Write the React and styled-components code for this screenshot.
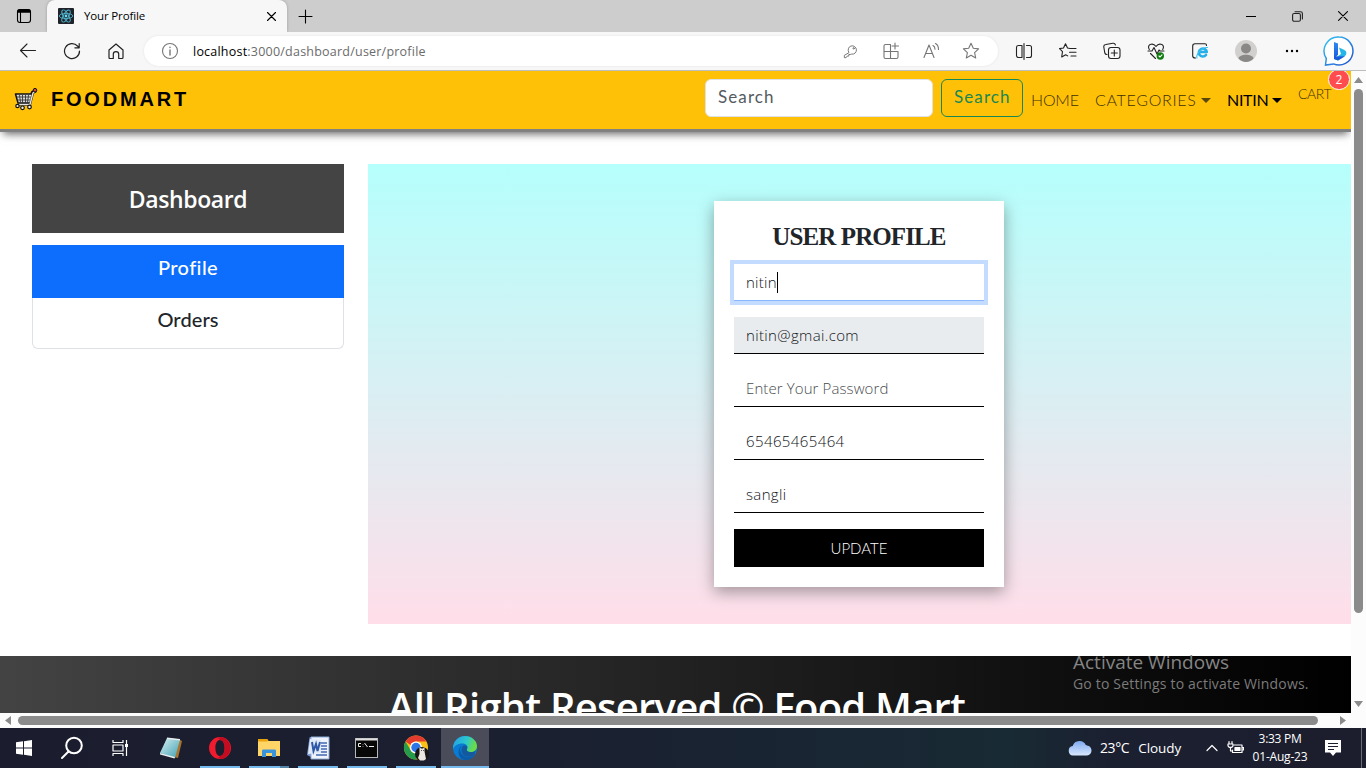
import React from "react";
import styled, { createGlobalStyle } from "styled-components";

const GlobalStyle = createGlobalStyle`
  * { box-sizing: border-box; }
  body { margin: 0; background: #fff; overflow: hidden; }
  svg { display: block; flex: none; }
`;

const ui = `"Open Sans", "Noto Sans", sans-serif`;
const lato = `Lato, sans-serif`;

const Screen = styled.div`
  width: 1366px;
  height: 768px;
  display: flex;
  flex-direction: column;
  overflow: hidden;
  position: relative;
  font-family: ${ui};
`;

const Label = styled.span`
  font-family: ${(p) => p.$font || ui};
  font-size: ${(p) => p.$size}px;
  font-weight: ${(p) => p.$weight || 400};
  letter-spacing: ${(p) => p.$spacing || 0}px;
  color: ${(p) => p.$color || "#000"};
  line-height: ${(p) => p.$line || 20}px;
  white-space: pre;
`;

/* browser chrome */
const TabStrip = styled.div`
  height: 32px;
  flex: none;
  background: #cdcdcd;
  display: flex;
`;
const StripButton = styled.div`
  width: ${(p) => p.$w}px;
  height: 32px;
  display: flex;
  align-items: center;
  justify-content: center;
`;
const Tab = styled.div`
  width: 240px;
  height: 32px;
  background: #f7f7f7;
  border-radius: 8px 8px 0 0;
  box-shadow: 0 0 3px rgba(0, 0, 0, 0.25);
  display: flex;
  align-items: center;
  padding: 0 11px;
  gap: 10px;
`;
const TabTitle = styled(Label)`
  flex: 1;
`;
const WindowButtons = styled.div`
  margin-left: auto;
  display: flex;
`;
const Toolbar = styled.div`
  height: 39px;
  flex: none;
  background: #f7f7f7;
  border-bottom: 1px solid #bebebe;
  display: flex;
  align-items: center;
  padding-left: 6px;
`;
const ToolButton = styled.div`
  width: ${(p) => p.$w || 44}px;
  height: 38px;
  display: flex;
  align-items: center;
  justify-content: center;
`;
const AddressBar = styled.div`
  width: 854px;
  height: 30px;
  margin: 0 4px 0 6px;
  border-radius: 15px;
  background: #fff;
  box-shadow: 0 0 3px rgba(0, 0, 0, 0.08);
  display: flex;
  align-items: center;
  padding: 0 7px 0 17px;
`;
const Url = styled(Label)`
  flex: 1;
  padding: 1px 0 0 14px;
`;

/* page viewport */
const Viewport = styled.div`
  height: 642px;
  flex: none;
  display: flex;
`;
const Page = styled.div`
  width: 1351px;
  height: 642px;
  overflow: hidden;
  background: #fff;
`;
const Navbar = styled.nav`
  height: 61px;
  background: #ffc107;
  border-bottom: 3px solid #808080;
  box-shadow: 0 5px 8px -3px rgba(0, 0, 0, 0.6);
  display: flex;
  align-items: flex-start;
  padding: 8px 0 0 13px;
`;
const Brand = styled.div`
  display: flex;
  align-items: center;
  height: 40px;
  gap: 13px;
  flex: 1;
`;
const SearchInput = styled.div`
  width: 228px;
  height: 38px;
  background: #fff;
  border: 1px solid #dee2e6;
  border-radius: 6px;
  padding: 4px 12px;
`;
const SearchButton = styled.div`
  width: 82px;
  height: 38px;
  margin-left: 8px;
  border: 1px solid #198754;
  border-radius: 6px;
  display: flex;
  padding: 4px 0 0 12px;
`;
const NavLink = styled.div`
  margin-left: ${(p) => p.$gap}px;
  width: ${(p) => p.$w}px;
  height: 42px;
  display: flex;
  align-items: center;
  justify-content: space-between;
`;
const CaretDown = styled.i`
  border: 5px solid transparent;
  border-top-color: ${(p) => p.$color};
  border-bottom: 0;
`;
const CartLink = styled.div`
  position: relative;
  width: 53px;
  margin-left: 16px;
  padding-top: 3px;
`;
const CartBadge = styled.div`
  position: absolute;
  right: 1px;
  top: -10px;
  width: 22px;
  height: 21px;
  border: 1px solid #fff;
  border-radius: 11px;
  background: #ff4d4f;
  display: flex;
  align-items: center;
  justify-content: center;
  clip-path: inset(2px 0 0 0);
`;
const Content = styled.main`
  height: 460px;
  margin-top: 32px;
  padding-left: 32px;
  display: flex;
  gap: 24px;
`;
const Sidebar = styled.aside`
  width: 312px;
  flex: none;
`;
const DashboardTitle = styled.div`
  height: 69px;
  background: #444;
  display: flex;
  align-items: center;
  justify-content: center;
  padding-top: 1px;
`;
const Menu = styled.div`
  margin-top: 12px;
`;
const MenuItem = styled.div`
  height: ${(p) => (p.$active ? 53 : 51)}px;
  display: flex;
  justify-content: center;
  padding-top: ${(p) => (p.$active ? 10 : 9)}px;
  background: ${(p) => (p.$active ? "#0d6efd" : "#fff")};
  border: ${(p) => (p.$active ? "0" : "1px solid #dee2e6")};
  border-top: 0;
  border-radius: ${(p) => (p.$active ? "0" : "0 0 6px 6px")};
`;
const Panel = styled.section`
  flex: 1;
  background: linear-gradient(#b5fffc, #ffdee9);
  padding: 37px 0 0 346px;
`;
const Card = styled.div`
  width: 290px;
  height: 386px;
  background: #fff;
  box-shadow: 0 5px 15px rgba(0, 0, 0, 0.35);
  padding: 20px;
  display: flex;
  flex-direction: column;
`;
const CardTitle = styled.div`
  height: 43px;
  display: flex;
  justify-content: center;
`;
const Field = styled.div`
  height: 37px;
  flex: none;
  margin-bottom: 16px;
  padding: 0 12px;
  display: flex;
  align-items: center;
  background: ${(p) => (p.$disabled ? "#e9ecef" : "#fff")};
  border-bottom: 1px solid ${(p) => (p.$focus ? "#86b7fe" : "#000")};
  box-shadow: ${(p) => (p.$focus ? "0 0 0 4px #c2dbff" : "none")};
`;
const TextCaret = styled.i`
  width: 1px;
  height: 21px;
  background: #000;
`;
const UpdateButton = styled.div`
  height: 38px;
  background: #000;
  display: flex;
  align-items: center;
  justify-content: center;
`;
const Footer = styled.footer`
  margin-top: 32px;
  height: 120px;
  background: linear-gradient(to right, #434343, #000);
  padding: 21px 0 0 388px;
`;

/* scrollbars */
const VerticalBar = styled.div`
  width: 15px;
  background: #fcfcfc;
  display: flex;
  flex-direction: column;
  align-items: center;
  padding: 6px 0;
`;
const HorizontalBar = styled.div`
  height: 15px;
  flex: none;
  background: #fcfcfc;
  display: flex;
  align-items: center;
  padding: 0 20px 0 5px;
`;
const Thumb = styled.div`
  width: ${(p) => p.$w}px;
  height: ${(p) => p.$h}px;
  border-radius: 5px;
  background: #8b8b8b;
`;
const Spacer = styled.div`
  flex: 1;
`;
const ThumbGap = styled.div`
  width: 7px;
  height: 6px;
`;

/* desktop */
const Watermark = styled.div`
  position: absolute;
  left: 1073px;
  top: 650px;
  display: flex;
  flex-direction: column;
`;
const Taskbar = styled.div`
  height: 40px;
  flex: none;
  background: linear-gradient(to right, #1b1d2e 0, #1b1f30 480px, #192432 760px, #182a34 1010px, #1b2030 1110px, #1c1d2d 100%);
  display: flex;
`;
const SystemButton = styled.div`
  width: ${(p) => p.$w || 48}px;
  height: 40px;
  display: flex;
  align-items: center;
  justify-content: center;
`;
const AppButton = styled.div`
  position: relative;
  width: ${(p) => (p.$active ? 48 : 49)}px;
  height: 40px;
  padding-right: ${(p) => (p.$active ? 0 : 2)}px;
  display: flex;
  align-items: center;
  justify-content: center;
  background: ${(p) => (p.$active ? "#4a4c59" : "transparent")};
  &::after {
    content: "";
    display: ${(p) => (p.$open || p.$active ? "block" : "none")};
    position: absolute;
    bottom: 0;
    left: ${(p) => (p.$active ? 0 : 4)}px;
    width: ${(p) => (p.$active ? 48 : 40)}px;
    height: 2px;
    background: ${(p) =>
      p.$stack ? "linear-gradient(to right, #76b9ed 31px, #5484a8 31px)" : "#76b9ed"};
  }
`;
const AppRow = styled.div`
  display: flex;
  padding-left: 3px;
  flex: 1;
`;
const Tray = styled.div`
  display: flex;
  align-items: center;
  height: 40px;
`;
const Weather = styled.div`
  display: flex;
  align-items: center;
  width: 137px;
`;
const Overflow = styled.div`
  margin-right: 3px;
`;
const Temperature = styled(Label)`
  margin: 0 9px 0 8px;
`;
const Clock = styled.div`
  width: 64px;
  display: flex;
  flex-direction: column;
  align-items: center;
`;
const ShowDesktop = styled.div`
  width: 5px;
  height: 40px;
  border-left: 1px solid #6a6b77;
`;

function Icon({ s = 18, vb = 18, color = "#222", w = 1.1, children }) {
  return (
    <svg width={s} height={s} viewBox={`0 0 ${vb} ${vb}`} fill="none" stroke={color}
      strokeWidth={w} strokeLinecap="round" strokeLinejoin="round">
      {children}
    </svg>
  );
}

const WorkspaceIcon = () => (
  <Icon s={16} vb={16} color="#000">
    <rect x="1.5" y="1.5" width="13" height="13" rx="2.5" />
    <path d="M2 4V3.5C2 2.6 2.600 2 3.500 2h9c.9 0 1.500.6 1.500 1.500V4z" fill="#000" strokeWidth="1.500" />
    <path d="M4.500 4v10" />
  </Icon>
);
const ReactIcon = () => (
  <svg width="16" height="16" viewBox="0 0 16 16">
    <rect width="16" height="16" rx="1" fill="#20232a" />
    <g fill="none" stroke="#4fb3cc" strokeWidth="0.9">
      <ellipse cx="8" cy="8" rx="6.800" ry="2.600" />
      <ellipse cx="8" cy="8" rx="6.800" ry="2.600" transform="rotate(60 8 8)" />
      <ellipse cx="8" cy="8" rx="6.800" ry="2.600" transform="rotate(120 8 8)" />
    </g>
    <circle cx="8" cy="8" r="1.400" fill="#61dafb" />
  </svg>
);
const CloseIcon = ({ s = 9, w = 1.1 }) => (
  <Icon s={s} vb={9} w={w}><path d="M.5.5l8 8M8.500.5l-8 8" stroke="#000" /></Icon>
);
const StarPath = "M9 1.300l2.300 5 5.300.600-4 3.700 1.100 5.400L9 13.300 4.300 16l1.100-5.400-4-3.700 5.300-.600z";

const CartIcon = () => (
  <svg width="25" height="24" viewBox="0 0 25 24" fill="none" strokeLinejoin="round">
    <path d="M23 3.500l-3.500 2L16.500 17H5.500" stroke="#111" strokeWidth="3.400" />
    <path d="M2.500 7h17l-2.500 9H5z" fill="#ddd" stroke="#111" strokeWidth="1.500" />
    <path d="M4 10h14.500M4.500 13h13M6.500 8l1 7.500M9.500 8v8M12.500 8v8M15.500 8l-1 8" stroke="#333" strokeWidth=".9" />
    <path d="M22.500 3.500L20 6l-3 11.500H5.500" stroke="#e4e4e4" strokeWidth="1.400" />
    <circle cx="22" cy="3.200" r="1.800" fill="#e04a3c" stroke="#111" />
    <circle cx="4.500" cy="19" r="1.700" fill="#eee" stroke="#111" strokeWidth="1.200" />
    <circle cx="9.500" cy="20.800" r="1.800" fill="#eee" stroke="#111" strokeWidth="1.200" />
    <circle cx="16.500" cy="20" r="1.800" fill="#eee" stroke="#111" strokeWidth="1.200" />
  </svg>
);

const BingIcon = () => (
  <svg width="32" height="32" viewBox="0 0 32 32">
    <defs>
      <linearGradient id="ring" x1="0" y1="0" x2="1" y2="1">
        <stop offset="0" stopColor="#35c9f0" /><stop offset="1" stopColor="#2350cf" />
      </linearGradient>
      <linearGradient id="bee" x1="0" y1="0" x2="0" y2="1">
        <stop offset="0" stopColor="#2f8af0" /><stop offset="1" stopColor="#1a5bdc" />
      </linearGradient>
    </defs>
    <path d="M16 2a14 14 0 1 1-5.500 26.900L2.500 30l.8-6.500A14 14 0 0 1 16 2z" fill="#fff" stroke="url(#ring)" strokeWidth="1.500" />
    <path d="M11 7l4 1.600v11.200L11 24z" fill="url(#bee)" />
    <path d="M16 12.500l5 2.300c3 1.500 3 4.500 1 6.200L15 25.500 11 24l7-5z" fill="#24b5e9" />
    <path d="M11 21.500V24l4 1.500 7-4.200z" fill="#1a5bdc" />
  </svg>
);

const browserActions = [
  <Icon key="split"><path d="M6.500 3.500H3.500c-1 0-2 .8-2 2v8c0 1.200 1 2 2 2h3M11.500 3.500h3c1 0 2 .8 2 2v8c0 1.200-1 2-2 2h-3M9 1.500v16M7 3.500v12" /></Icon>,
  <Icon key="favorites"><path d="M11 6.500L8.500 6 6.500 1.800 4.500 6l-4 .6 3 3-.8 5.400 4-2.300 2 1.200M11 6.500h6M10.500 10.300h6.500M12 14h5" /></Icon>,
  <Icon key="collections"><path d="M4 12.500c-1.400 0-2-.8-2.200-1.500L.8 5c-.2-1.400.6-2.300 2-2.500l7-1.200c1.400-.2 2.300.5 2.600 1.700" /><rect x="5.500" y="5.500" width="11.500" height="11" rx="2.500" /><path d="M11.300 8v6M8.300 11h6" /></Icon>,
  <Icon key="health"><path d="M2.300 7.500C.8 5 1.500 3 4 2.300c2-.5 3.800.5 5 2.200 1.200-1.700 3-2.700 5-2.200 2.500.7 3.200 2.700 1.700 5.200M1 9h4l2-3.500L10 12l2-4 1 1h4M3.500 11.500l5 5" /><circle cx="13.300" cy="14" r="3.700" fill="#107c10" stroke="none" /><path d="M12 14l1 1 2-2.200" stroke="#fff" /></Icon>,
  <Icon key="ie"><path d="M4.500 16c-1.800 0-2.800-.8-2.800-2V4c0-1.500 1-2.300 2.300-2.300h10c1 0 1.500.8 1.500 1.800" /><path d="M15 13a4 4 0 1 1 .8-3H8.500" stroke="#25aee8" strokeWidth="2.600" /><path d="M6 16C4.500 13 11 5 16.500 5.500" stroke="#35c0f0" /></Icon>,
];

export default function App() {
  return (
    <Screen>
      <GlobalStyle />
      <TabStrip>
        <StripButton $w={47}><WorkspaceIcon /></StripButton>
        <Tab>
          <ReactIcon />
          <TabTitle $size={11.5} $spacing={-0.15}>Your Profile</TabTitle>
          <CloseIcon s={9} />
        </Tab>
        <StripButton $w={36}>
          <Icon s={15} vb={15}><path d="M7.500 1v13M1 7.500h13" stroke="#000" /></Icon>
        </StripButton>
        <WindowButtons>
          <StripButton $w={46}><Icon s={10} vb={10}><path d="M0 5.500h10" stroke="#000" /></Icon></StripButton>
          <StripButton $w={46}><Icon s={11} vb={11}><rect x=".6" y="2.500" width="7.800" height="7.800" rx="1.500" /><path d="M3 .7h5.500c1.300 0 1.900.7 1.900 1.900V8" /></Icon></StripButton>
          <StripButton $w={46}><CloseIcon s={10} w={1} /></StripButton>
        </WindowButtons>
      </TabStrip>
      <Toolbar>
        <ToolButton><Icon><path d="M16.500 8.500H1.500M8 2L1.500 8.500 8 15" /></Icon></ToolButton>
        <ToolButton><Icon w={1.2}><path d="M16.500 9A7.500 7.500 0 1 1 14.500 4l1.500 1.500M16.200 1.500v4.300h-4.300" /></Icon></ToolButton>
        <ToolButton><Icon w={1.2}><path d="M2 8l7-6 7 6v7.500c0 .6-.4 1-1 1h-3.300V12c0-3.200-5.400-3.200-5.400 0v4.500H3c-.6 0-1-.4-1-1z" /></Icon></ToolButton>
        <AddressBar>
          <Icon color="#767676"><circle cx="9" cy="9" r="7.500" /><path d="M9 8v5M9 5.300v.2" strokeWidth="1.400" /></Icon>
          <Url $size={12.5} $spacing={0.22} $color="#6b6b6b"><Label $size={12.5} $spacing={0.22}>localhost</Label>:3000/dashboard/user/profile</Url>
          <ToolButton $w={40}><Icon s={16} color="#767676"><path d="M6.500 10.500a4.700 4.700 0 1 1 3 2L8 13H6.500v1.700H4.700L3.500 16.500H1.500v-2.200z" /><circle cx="12" cy="6" r=".8" /></Icon></ToolButton>
          <ToolButton $w={40}><Icon color="#767676"><path d="M8.500 2.500h-5c-1 0-1.500.5-1.500 1.500v11c0 1 .5 1.500 1.500 1.500h11c1 0 1.500-.5 1.500-1.500V9.500H2M8.500 2.500v14M13 1v6M10 4h6.500" /></Icon></ToolButton>
          <ToolButton $w={40}><Icon color="#767676"><path d="M2 15.500L7 3l5 12.500M3.800 11.500h6.500M11 3.500c1.500.7 2 2 2 3.800M13.500 1.500c2.300 1.200 3 3.500 3 6" /></Icon></ToolButton>
          <ToolButton $w={40}><Icon color="#767676"><path d={StarPath} /></Icon></ToolButton>
        </AddressBar>
        {browserActions.map((icon) => <ToolButton key={icon.key}>{icon}</ToolButton>)}
        <ToolButton $w={48}>
          <svg width="22" height="22" viewBox="0 0 22 22"><circle cx="11" cy="11" r="11" fill="#d2d0ce" /><circle cx="11" cy="8.500" r="5" fill="#8a8886" /><path d="M3.500 18.500c1-5 14-5 15 0-4 4.600-11 4.600-15 0z" fill="#8a8886" /></svg>
        </ToolButton>
        <ToolButton><svg width="14" height="4" viewBox="0 0 14 4"><circle cx="2" cy="2" r="1.200" /><circle cx="7" cy="2" r="1.200" /><circle cx="12" cy="2" r="1.200" /></svg></ToolButton>
        <ToolButton $w={50}><BingIcon /></ToolButton>
      </Toolbar>

      <Viewport>
        <Page>
          <Navbar>
            <Brand><CartIcon /><Label $font={`"Liberation Sans", sans-serif`} $size={20} $weight={700} $spacing={2.8}>FOODMART</Label></Brand>
            <SearchInput><Label $font={lato} $size={17} $line={26} $spacing={1.1} $color="#555a60">Search</Label></SearchInput>
            <SearchButton><Label $font={lato} $size={17} $line={26} $spacing={1.1} $color="#198754">Search</Label></SearchButton>
            <NavLink $gap={8} $w={48}><Label $font={lato} $size={16} $weight={300} $spacing={-0.2} $color="#403001">HOME</Label></NavLink>
            <NavLink $gap={16} $w={116}><Label $font={lato} $size={16} $weight={300} $spacing={0.7} $color="#403001">CATEGORIES</Label><CaretDown $color="#59470a" /></NavLink>
            <NavLink $gap={16} $w={55}><Label $font={lato} $size={16} $spacing={-0.3}>NITIN</Label><CaretDown $color="#000" /></NavLink>
            <CartLink>
              <Label $font={lato} $size={14} $weight={300} $spacing={-0.4} $color="#403001">CART</Label>
              <CartBadge><Label $size={12} $color="#fff">2</Label></CartBadge>
            </CartLink>
          </Navbar>
          <Content>
            <Sidebar>
              <DashboardTitle><Label $size={23} $line={30} $weight={600} $spacing={-0.4} $color="#fff">Dashboard</Label></DashboardTitle>
              <Menu>
                <MenuItem $active><Label $font={lato} $size={20} $line={24} $weight={500} $spacing={0.4} $color="#fff">Profile</Label></MenuItem>
                <MenuItem><Label $font={lato} $size={20} $line={24} $weight={500} $spacing={0.1} $color="#212529">Orders</Label></MenuItem>
              </Menu>
            </Sidebar>
            <Panel>
              <Card>
                <CardTitle><Label $font={`"Liberation Serif", serif`} $size={25} $line={31} $weight={700} $spacing={-0.9} $color="#212529">USER PROFILE</Label></CardTitle>
                <Field $focus><Label $size={15} $weight={300} $spacing={0.25} $color="#111417">nitin</Label><TextCaret /></Field>
                <Field $disabled><Label $size={15} $weight={300} $spacing={0.36} $color="#111417">nitin@gmai.com</Label></Field>
                <Field><Label $size={15} $weight={300} $spacing={0.1} $color="#4a4d50">Enter Your Password</Label></Field>
                <Field><Label $size={15} $weight={300} $spacing={0.4} $color="#111417">65465465464</Label></Field>
                <Field><Label $size={15} $weight={300} $spacing={0.35} $color="#111417">sangli</Label></Field>
                <UpdateButton><Label $font={lato} $size={15} $weight={300} $color="#fff">UPDATE</Label></UpdateButton>
              </Card>
            </Panel>
          </Content>
          <Footer><Label $size={40} $line={60} $weight={600} $spacing={-0.76} $color="#fff">All Right Reserved © Food Mart</Label></Footer>
        </Page>
        <VerticalBar>
          <svg width="9" height="6" viewBox="0 0 9 6"><path d="M4.500 0L9 6H0z" fill="#8b8b8b" /></svg>
          <ThumbGap />
          <Thumb $w={9} $h={524} />
          <Spacer />
          <svg width="9" height="6" viewBox="0 0 9 6"><path d="M4.500 6L9 0H0z" fill="#8b8b8b" /></svg>
        </VerticalBar>
      </Viewport>
      <HorizontalBar>
        <svg width="6" height="9" viewBox="0 0 6 9"><path d="M0 4.500L6 0v9z" fill="#8b8b8b" /></svg>
        <ThumbGap />
        <Thumb $w={1300} $h={9} />
        <Spacer />
        <svg width="6" height="9" viewBox="0 0 6 9"><path d="M6 4.500L0 0v9z" fill="#8b8b8b" /></svg>
      </HorizontalBar>

      <Taskbar>
        <SystemButton><svg width="16" height="16" viewBox="0 0 16 16" fill="#fff"><path d="M0 2.300l7-1V7.500H0zM8 1.200L16 0v7.500H8zM0 8.500h7v6.200l-7-1zM8 8.500h8V16l-8-1.200z" /></svg></SystemButton>
        <SystemButton><Icon s={24} vb={24} color="#fff" w={2}><circle cx="14" cy="9.500" r="7.800" /><path d="M8.500 15.500l-6.500 6.500" /></Icon></SystemButton>
        <SystemButton><Icon s={18} color="#fff" w={1.2}><path d="M2 1v2.500h10V1M2 17v-2.500h10V17M2 6h10v6H2zM15.500 1v16" strokeLinecap="butt" /><path d="M15.500 5v3" strokeWidth="3" strokeLinecap="butt" /></Icon></SystemButton>
        <AppRow>
          <AppButton>
            <svg width="24" height="24" viewBox="0 0 24 24"><defs><linearGradient id="note" x1="0" y1="0" x2="1" y2="1"><stop offset="0" stopColor="#d8f1f2" /><stop offset="1" stopColor="#3f9fb2" /></linearGradient></defs><path d="M19 3l4 2-4 17-4-1z" fill="#a9752e" /><path d="M8 2l13 1.500-5 18.500L1 17z" fill="url(#note)" /><path d="M1 17l15 4-.5 1.500L1 18.500zM8 1.500l13 1.500v1.500L8 3z" fill="#e9eeee" /></svg>
          </AppButton>
          <AppButton $open>
            <svg width="24" height="24" viewBox="0 0 24 24"><path fillRule="evenodd" d="M12 1a11 11 0 1 0 0 22 11 11 0 0 0 0-22zm0 3c2.800 0 4.600 3.500 4.600 8s-1.800 8-4.600 8-4.600-3.500-4.600-8S9.200 4 12 4z" fill="#f01b2d" /><path d="M13 1.100a11 11 0 0 1 0 21.800l-3-.9 2-2c2.800 0 4.600-3.500 4.600-8S14.800 4 12 4l-2-2z" fill="#c30c20" /></svg>
          </AppButton>
          <AppButton $open $stack>
            <svg width="24" height="24" viewBox="0 0 24 24"><path d="M1 3h9l1.500 2H23v15H1z" fill="#ffd567" /><path d="M1 3h9l1.500 1.500L10 5.500H1z" fill="#e8a30d" /><path d="M5 21v-6c0-1 .5-1.500 1.500-1.500h11c1 0 1.500.5 1.500 1.500v6h-4v-4H9v4z" fill="#3a94dc" /></svg>
          </AppButton>
          <AppButton $open>
            <svg width="24" height="24" viewBox="0 0 24 24"><path d="M5 1h18v22H5z" fill="#eff4fc" stroke="#8ca9d7" /><path d="M15 7h6M15 10h6M15 13h6M12 16h9M10 19h11" stroke="#4268b3" strokeWidth="1.300" /><path d="M3.500 1.500L5 1v20l-4-2z" fill="#7f9fd6" /><path d="M4 3l11 1v13L2 18z" fill="#dfe9f8" /><path d="M6 6l1.500 9L10 8l1.500 7L14 6" fill="none" stroke="#2f57a8" strokeWidth="2" /></svg>
          </AppButton>
          <AppButton $open>
            <svg width="23" height="20" viewBox="0 0 23 20"><rect x=".5" y=".5" width="22" height="19" fill="#080808" stroke="#b8b8b8" /><path d="M1 1.500h21" stroke="#ddd" strokeWidth="2" /><path d="M6 5.500H3.500v3H6M8 6v.5M8 8v.5M9.500 5l3 4M14 8.500h5" fill="none" stroke="#eee" /></svg>
          </AppButton>
          <AppButton $open>
            <svg width="26" height="26" viewBox="0 0 26 26"><circle cx="13" cy="12.500" r="12" fill="#fbc116" /><path d="M2.600 6.500A12 12 0 0 1 23.400 6.500H13a6 6 0 0 0-5.500 3.500z" fill="#e33b2e" /><path d="M2.600 6.500A12 12 0 0 0 13 24.500l4-7-4 1a6 6 0 0 1-5.200-3z" fill="#249c4b" /><circle cx="13" cy="12.500" r="6" fill="#fff" /><circle cx="13" cy="12.500" r="4.700" fill="#2d76e8" /><circle cx="19" cy="19" r="7" fill="#161616" /><path d="M16.500 12l1.500 1.500h2l1.500-1.500v4.500l1.500 7.500-2 1.500h-4l-2-2.500 1.500-4z" fill="#ece8e1" /><path d="M18 15.500h.8M20 15.500h.8" stroke="#333" /></svg>
          </AppButton>
          <AppButton $active>
            <svg width="24" height="24" viewBox="0 0 24 24"><defs><linearGradient id="wave" x1="0" y1="0" x2="1" y2=".3"><stop offset=".2" stopColor="#27a9df" /><stop offset=".6" stopColor="#2dc8cd" /><stop offset="1" stopColor="#69dc48" /></linearGradient></defs><circle cx="12" cy="12" r="12" fill="#087bd2" /><path d="M0 11C1 4 6 0 12 0c7 0 12 5 12 10 0 4-3 6-6 6-3.500 0-5-1.500-4-3 1.800-3-1-5.500-4.500-5.500C5 7.500 2 9 0 13z" fill="url(#wave)" /><path d="M9.500 9C7 11 6.500 14 8 17c2.500 4.500 8 5 13.500 2.500-2.500 4-7 5-10.500 4.300C4 22 4 12 9.500 9z" fill="#0c5ba7" /><path d="M14 13c-1 1.500.5 3 4 3 2 0 3.500-.5 4.500-1.500l-1 5C16 22 11 21 9 17c-1-2.500-.5-5 1-7 3-1.500 5 1 4 3z" fill="#14589e" /></svg>
          </AppButton>
        </AppRow>
        <Tray>
          <Weather>
            <svg width="24" height="18" viewBox="0 0 24 18"><defs><linearGradient id="cloud" x1="0" y1="0" x2="0" y2="1"><stop offset="0" stopColor="#7eaaf0" /><stop offset="1" stopColor="#d8e7ff" /></linearGradient></defs><path d="M5 16.500a4.800 4.800 0 0 1-.3-9.500A7 7 0 0 1 18 6.500a5 5 0 0 1 1 10z" fill="url(#cloud)" /><path d="M5 7c3 0 5 1 6 3 2-2.500 5-3.500 8-3" fill="none" stroke="#a7c6f8" /></svg>
            <Temperature $size={14} $spacing={-0.4} $color="#fff">23°C</Temperature>
            <Label $size={13.5} $spacing={-0.05} $color="#fff">Cloudy</Label>
          </Weather>
          <Overflow><Icon s={14} vb={14} color="#fff" w={1.2}><path d="M2 9.500L7 4.500l5 5" /></Icon></Overflow>
          <SystemButton $w={26}><Icon s={17} vb={17} color="#fff" w={1.2}><path d="M7 5h8v7.500H5.500V10M15.500 7.500h1v2.500h-1" /><path d="M8 7.500h5v3H8z" fill="#fff" /><path d="M2 1.500v2M5 1.500v2M1 4h5v1.500C6 8 1 8 1 5.500zM3.500 7.500V11h2" /></Icon></SystemButton>
          <Clock>
            <Label $size={12} $line={18} $spacing={-0.3} $color="#fff">3:33 PM</Label>
            <Label $size={12} $line={18} $spacing={-0.2} $color="#fff">01-Aug-23</Label>
          </Clock>
          <SystemButton $w={42}><svg width="16" height="16" viewBox="0 0 16 16"><path d="M0 0h16v12.500h-5L8 16l-3-3.500H0z" fill="#fff" /><path d="M3 3.500h10M3 6.500h10M3 9.500h6" stroke="#1c1d2d" /></svg></SystemButton>
          <SystemButton $w={7} />
          <ShowDesktop />
        </Tray>
      </Taskbar>
      <Watermark>
        <Label $size={19} $line={24} $color="#858585">Activate Windows</Label>
        <Label $size={14} $line={20} $spacing={0.18} $color="#7b7b7b">Go to Settings to activate Windows.</Label>
      </Watermark>
    </Screen>
  );
}
